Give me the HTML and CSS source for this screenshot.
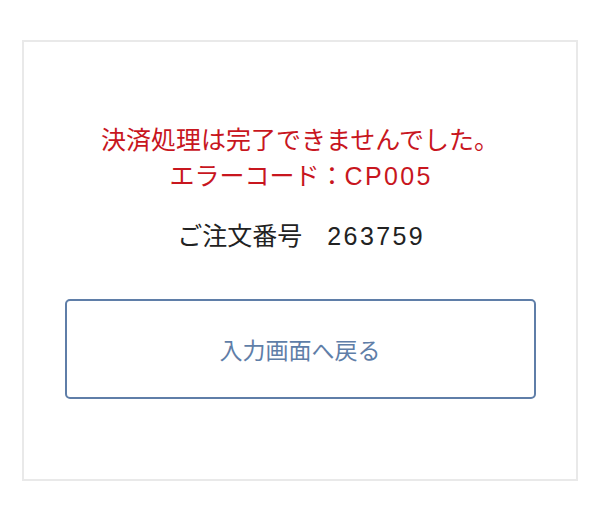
FILE: index.html
```html
<!DOCTYPE html>
<html lang="ja">

    <head>
        <meta charset="UTF-8">
        <meta name="viewport" content="width=device-width, initial-scale=1.0">
        <title>決済エラー</title>
        <link rel="stylesheet" href="styles.css">
    </head>

    <body>
        <div class="card">
            <p class="error">決済処理は完了できませんでした。<br>エラーコード：<span class="code">CP005</span></p>
            <p class="order">ご注文番号　<span class="code">263759</span></p>
            <button type="button" class="btn-back">入力画面へ戻る</button>
        </div>
    </body>

</html>
```

FILE: styles.css
```css
body {
    font-family: "Liberation Sans", "Noto Sans CJK JP", sans-serif;
    margin: 0;
    background-color: #fff;
}

.card {
    margin: 40px 22px 0;
    height: 441px;
    border: 2px solid #e9e9e9;
    padding-top: 80px;
    box-sizing: border-box;
    text-align: center;
}

.error {
    margin: 0;
    color: #c8161e;
    font-size: 25px;
    line-height: 36px;
}

.order {
    margin: 24px 0 0;
    color: #222;
    font-size: 25px;
    line-height: 36px;
}

.code {
    letter-spacing: 2.4px;
    margin-right: -2.4px;
}

.btn-back {
    display: block;
    width: 471px;
    height: 100px;
    margin: 45px auto 0;
    background-color: #fff;
    border: 2px solid #5f7ea8;
    border-radius: 5px;
    color: #5f7ea8;
    font-family: inherit;
    font-size: 23px;
    cursor: pointer;
}
```
